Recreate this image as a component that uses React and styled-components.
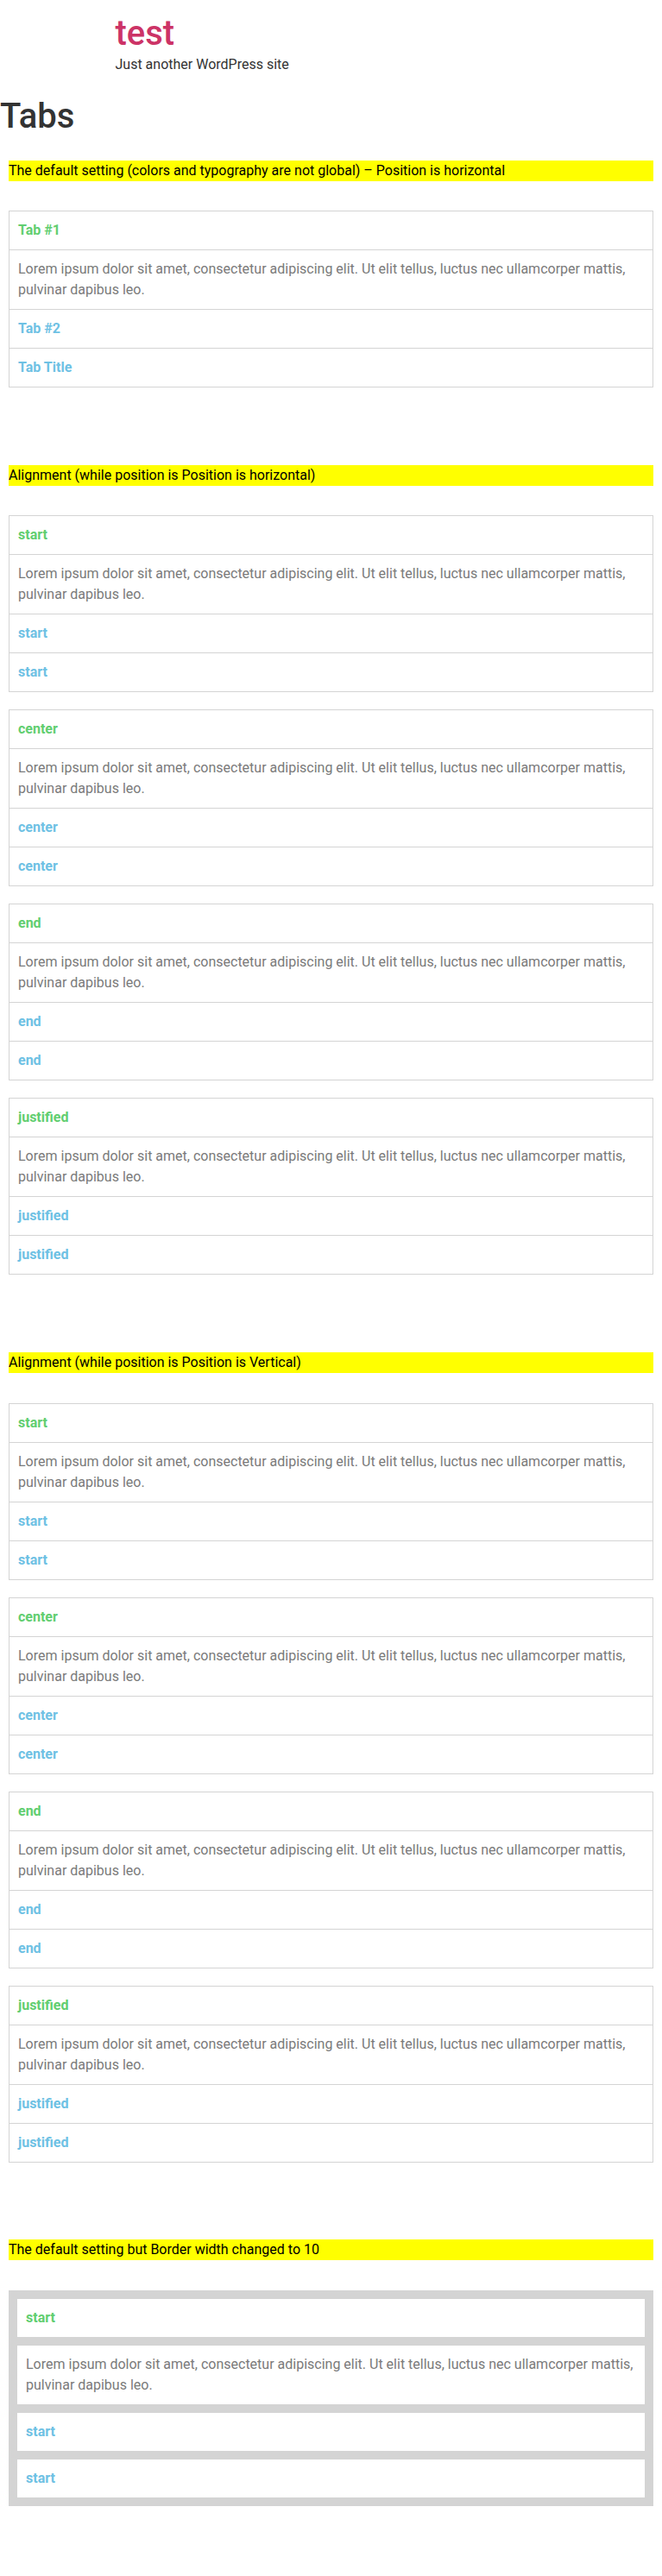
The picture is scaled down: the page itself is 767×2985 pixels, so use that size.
import React from "react";
import styled, { createGlobalStyle } from "styled-components";

const GlobalStyle = createGlobalStyle`
  html, body {
    margin: 0;
    padding: 0;
    background: #fff;
  }
  body {
    font-family: Roboto, "Liberation Sans", Arial, sans-serif;
    font-size: 16px;
    line-height: 1.5;
    color: #333;
    -webkit-font-smoothing: antialiased;
  }
  * { box-sizing: border-box; }
`;

const Page = styled.div`
  width: 100%;
  min-height: 2985px;
`;

const SiteHeader = styled.header`
  max-width: 500px;
  margin: 0 auto;
  padding-top: 15px;
`;

const SiteTitle = styled.h1`
  margin: 0;
  font-size: 40px;
  font-weight: 500;
  line-height: 1.2;
  color: #cc3366;
`;

const SiteDescription = styled.p`
  margin: 0;
  font-size: 16px;
  line-height: 24px;
  color: #333;
`;

const PageTitle = styled.h1`
  margin: 24.3px 0 0;
  font-size: 40px;
  font-weight: 500;
  line-height: 1.2;
  color: #333;
`;

const Content = styled.main`
  padding: 26.7px 10px 0;
`;

const Section = styled.section`
  display: flex;
  flex-direction: column;
  margin-bottom: ${(p) => (p.$last ? "0" : "89.7px")};
`;

const Note = styled.p`
  margin: 0 0 34.4px;
  background: #ffff00;
  color: #000;
  font-size: 16px;
  line-height: 24px;
`;

const WidgetStack = styled.div`
  display: flex;
  flex-direction: column;
  gap: 20px;
`;

const Tabs = styled.div`
  display: flex;
  flex-direction: column;
  border-bottom: ${(p) => p.$bw}px solid #d4d4d4;
`;

const TabTitle = styled.div`
  border: ${(p) => p.$bw}px solid #d4d4d4;
  border-bottom: none;
  padding: 10px;
  font-size: 16px;
  font-weight: 700;
  line-height: 24px;
  color: ${(p) => (p.$active ? "#61ce70" : "#6ec1e4")};
  cursor: pointer;
`;

const TabContent = styled.div`
  border: ${(p) => p.$bw}px solid #d4d4d4;
  border-bottom: none;
  padding: 10px;
  font-size: 16px;
  line-height: 24px;
  color: #7a7a7a;
`;

const LOREM =
  "Lorem ipsum dolor sit amet, consectetur adipiscing elit. Ut elit tellus, luctus nec ullamcorper mattis, pulvinar dapibus leo.";

function TabsWidget({ titles, bw = 1 }) {
  return (
    <Tabs $bw={bw}>
      <TabTitle $bw={bw} $active>
        {titles[0]}
      </TabTitle>
      <TabContent $bw={bw}>{LOREM}</TabContent>
      {titles.slice(1).map((t, i) => (
        <TabTitle key={i} $bw={bw}>
          {t}
        </TabTitle>
      ))}
    </Tabs>
  );
}

const ALIGNS = ["start", "center", "end", "justified"];

const sections = [
  {
    note: "The default setting (colors and typography are not global) \u2013 Position is horizontal",
    widgets: [{ titles: ["Tab #1", "Tab #2", "Tab Title"], bw: 1 }],
  },
  {
    note: "Alignment (while position is Position is horizontal)",
    widgets: ALIGNS.map((a) => ({ titles: [a, a, a], bw: 1 })),
  },
  {
    note: "Alignment (while position is Position is Vertical)",
    widgets: ALIGNS.map((a) => ({ titles: [a, a, a], bw: 1 })),
  },
  {
    note: "The default setting but Border width changed to 10",
    widgets: [{ titles: ["start", "start", "start"], bw: 10 }],
  },
];

export default function App() {
  return (
    <Page>
      <GlobalStyle />
      <SiteHeader>
        <SiteTitle>test</SiteTitle>
        <SiteDescription>Just another WordPress site</SiteDescription>
      </SiteHeader>
      <PageTitle>Tabs</PageTitle>
      <Content>
        {sections.map((s, i) => (
          <Section key={i} $last={i === sections.length - 1}>
            <Note>{s.note}</Note>
            <WidgetStack>
              {s.widgets.map((w, j) => (
                <TabsWidget key={j} titles={w.titles} bw={w.bw} />
              ))}
            </WidgetStack>
          </Section>
        ))}
      </Content>
    </Page>
  );
}
